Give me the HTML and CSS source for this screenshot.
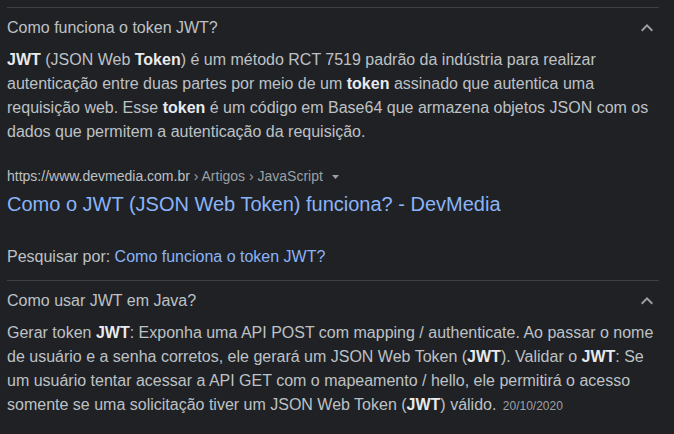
FILE: index.html
```html
<!DOCTYPE html>
<html lang="pt-BR">
<head>
<meta charset="utf-8">
<title>JWT</title>
<link rel="stylesheet" href="styles.css">
</head>
<body>
<div class="list">
  <section class="item">
    <div class="q">
      <span class="q-text">Como funciona o token JWT?</span>
      <svg class="chev" width="24" height="24" viewBox="0 0 24 24"><path d="M12 8l-6 6 1.41 1.41L12 10.83l4.59 4.58L18 14z"/></svg>
    </div>
    <div class="ans">
      <p class="txt"><b>JWT</b> (JSON Web <b>Token</b>) é um método RCT 7519 padrão da indústria para realizar autenticação entre duas partes por meio de um <b>token</b> assinado que autentica uma requisição web. Esse <b>token</b> é um código em Base64 que armazena objetos JSON com os dados que permitem a autenticação da requisição.</p>
      <div class="cite"><span class="dom">https://www.devmedia.com.br</span><span class="crumb"> › Artigos › JavaScript</span><svg class="tri" width="7" height="4" viewBox="0 0 7 4"><path d="M0 0h7L3.5 4z"/></svg></div>
      <a class="title" href="#">Como o JWT (JSON Web Token) funciona? - DevMedia</a>
      <div class="search">Pesquisar por: <a href="#">Como funciona o token JWT?</a></div>
    </div>
  </section>
  <section class="item">
    <div class="q">
      <span class="q-text">Como usar JWT em Java?</span>
      <svg class="chev" width="24" height="24" viewBox="0 0 24 24"><path d="M12 8l-6 6 1.41 1.41L12 10.83l4.59 4.58L18 14z"/></svg>
    </div>
    <div class="ans">
      <p class="txt">Gerar token <b>JWT</b>: Exponha uma API POST com mapping / authenticate. Ao passar o nome de usuário e a senha corretos, ele gerará um JSON Web Token (<b>JWT</b>). Validar o <b>JWT</b>: Se um usuário tentar acessar a API GET com o mapeamento / hello, ele permitirá o acesso somente se uma solicitação tiver um JSON Web Token (<b>JWT</b>) válido. <span class="date">20/10/2020</span></p>
    </div>
  </section>
</div>
</body>
</html>
```

FILE: styles.css
```css
html, body {
  margin: 0;
  background: #202124;
}
body {
  padding: 7px 15px 0 7px;
  font-family: "Liberation Sans", Arial, sans-serif;
  color: #bdc1c6;
}
.list {
  width: 652px;
}
.item {
  border-top: 1px solid #3c4043;
}
.q {
  display: flex;
  align-items: center;
  justify-content: space-between;
  padding: 8px 0;
  height: 24px;
}
.q-text {
  font-size: 16px;
  line-height: 24px;
  color: #bdc1c6;
}
.chev {
  fill: #9aa0a6;
  display: block;
}
.txt {
  margin: 0;
  font-size: 16px;
  line-height: 24px;
  color: #bdc1c6;
}
.txt b {
  color: #e8eaed;
}
.cite {
  margin-top: 22px;
  font-size: 14px;
  line-height: 20px;
  display: flex;
  align-items: center;
}
.dom {
  color: #bdc1c6;
}
.crumb {
  color: #9aa0a6;
  white-space: pre;
}
.tri {
  fill: #9aa0a6;
  margin-left: 9px;
  margin-top: 1px;
  display: block;
}
.title {
  display: block;
  margin-top: 5px;
  font-size: 20px;
  line-height: 26px;
  color: #8ab4f8;
  text-decoration: none;
}
.search {
  margin-top: 28px;
  margin-bottom: 11px;
  font-size: 16px;
  line-height: 24px;
  color: #bdc1c6;
}
.search a {
  color: #8ab4f8;
  text-decoration: none;
}
.date {
  font-size: 12px;
  color: #9aa0a6;
  margin-left: 2px;
}
```
